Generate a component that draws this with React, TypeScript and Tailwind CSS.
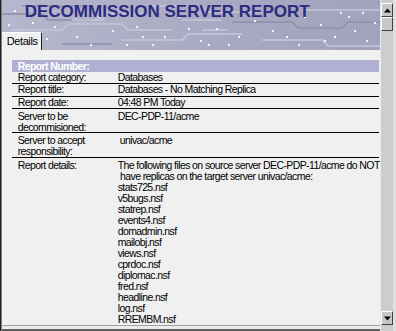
import React from "react";

const files = [
  "stats725.nsf",
  "v5bugs.nsf",
  "statrep.nsf",
  "events4.nsf",
  "domadmin.nsf",
  "mailobj.nsf",
  "views.nsf",
  "cprdoc.nsf",
  "diplomac.nsf",
  "fred.nsf",
  "headline.nsf",
  "log.nsf",
  "RREMBM.nsf",
];

// decorative circuit board traces behind the header
function CircuitBackdrop() {
  const traces = [
    "M0 14 H40 L46 20 H90",
    "M10 30 H60 L66 24 H120 L126 30 H170",
    "M150 6 H200 L206 12 H260",
    "M230 22 H290 L296 28 H340 L346 22 H378",
    "M120 40 H180 L186 34 H240",
    "M260 40 H320 L326 46 H378",
    "M60 44 H110",
    "M300 10 H378",
    "M180 20 H220",
    "M20 6 H90",
    "M70 20 H100 L106 14 H140",
    "M200 30 H226",
  ];
  const dots = [
    [12, 10], [30, 22], [52, 26], [74, 36], [96, 16], [110, 30], [134, 26],
    [150, 44], [162, 36], [176, 16], [198, 40], [214, 28], [236, 36],
    [252, 20], [270, 30], [284, 36], [302, 16], [318, 24], [332, 36],
    [346, 16], [352, 30], [364, 40], [372, 22], [360, 12], [338, 12],
    [206, 44], [124, 44], [88, 44], [44, 38], [6, 24], [140, 36],
    [186, 28], [226, 44], [296, 44], [322, 40],
  ];
  return (
    <svg
      className="absolute inset-0"
      width="378"
      height="50"
      viewBox="0 0 378 50"
    >
      <defs>
        <linearGradient id="hdr" x1="0" y1="0" x2="1" y2="0">
          <stop offset="0" stopColor="#b6b6cc" />
          <stop offset="0.6" stopColor="#a8a8c2" />
          <stop offset="1" stopColor="#a2a2bc" />
        </linearGradient>
      </defs>
      <rect width="378" height="50" fill="url(#hdr)" />
      {traces.map((d, i) => (
        <path
          key={i}
          d={d}
          fill="none"
          stroke={i % 3 === 0 ? "#8e8eac" : "#c6c6da"}
          strokeWidth="1.5"
        />
      ))}
      {dots.map(([x, y], i) => (
        <rect key={i} x={x} y={y} width="2" height="2" fill="#f4f4fa" />
      ))}
    </svg>
  );
}

function ScrollButton({ up }: { up?: boolean }) {
  return (
    <div className="w-[12px] h-[14px] bg-[#c8c8c8] border border-t-white border-l-white border-r-[#404040] border-b-[#404040] flex items-center justify-center">
      <svg width="7" height="5" viewBox="0 0 7 5">
        <path d={up ? "M3.5 0.5 L7 4.5 H0 Z" : "M0 0.5 H7 L3.5 4.5 Z"} fill="#000" />
      </svg>
    </div>
  );
}

function Row({
  label,
  children,
  cls,
}: {
  label: React.ReactNode;
  children: React.ReactNode;
  cls: string;
}) {
  return (
    <div className={`grid grid-cols-[106px_1fr] ${cls}`}>
      <div className="pl-[6px]">{label}</div>
      <div>{children}</div>
    </div>
  );
}

export default function App() {
  return (
    <div
      className="w-[396px] h-[331px] overflow-hidden flex bg-[#e4e4e4] text-[10.5px] leading-[11px] tracking-[-0.6px] text-black"
      style={{ fontFamily: '"Liberation Sans", Arial, sans-serif' }}
    >
      <div className="w-px bg-[#202020]" />
      <div className="w-px bg-[#808080]" />
      <div className="w-[378px] flex flex-col">
        <div className="relative h-[50px] shrink-0">
          <CircuitBackdrop />
          <div className="relative pl-[23px] pt-[2px] text-[17px] leading-[20px] font-bold tracking-normal text-[#2b2b80]">
            DECOMMISSION SERVER REPORT
          </div>
          <div className="absolute left-0 bottom-0 w-[40px] h-[18px] bg-[#f0f0f0] border-t border-white border-r border-r-[#202020] rounded-tr-[2px] flex items-center pl-[5px] text-[11px] tracking-[-0.4px]">
            Details
          </div>
        </div>
        <div className="flex-1 bg-[#f0f0f0] pt-[10px] pl-[10px] pr-[1px]">
          <div className="bg-[#b0b0d4] text-white font-bold h-[12px] pl-[6px] pt-px">
            Report Number:
          </div>
          <Row label="Report category:" cls="h-[11px]">Databases</Row>
          <Row label="Report title:" cls="h-[13px] border-t border-black">
            Databases - No Matching Replica
          </Row>
          <Row label="Report date:" cls="h-[12px] border-t border-black">
            04:48 PM Today
          </Row>
          <Row
            label={<>Server to be<br />decommisioned:</>}
            cls="h-[24px] border-t border-black pt-[2px]"
          >
            DEC-PDP-11/acme
          </Row>
          <Row
            label={<>Server to accept<br />responsibility:</>}
            cls="h-[25px] border-t border-black pt-[2px]"
          >
            <div className="pl-[2px]">univac/acme</div>
          </Row>
          <Row label="Report details:" cls="border-t border-black pt-[2px]">
            <div className="whitespace-nowrap">
              The following files on source server DEC-PDP-11/acme do NOT
            </div>
            <div className="whitespace-pre"> have replicas on the target server univac/acme:</div>
            {files.map((f) => (
              <div key={f}>{f}</div>
            ))}
          </Row>
        </div>
        <div className="h-[6px] shrink-0 border-t border-[#a0a0a0] bg-[#ececec] flex flex-col justify-end">
          <div className="h-[2px] bg-[#606060]" />
        </div>
      </div>
      <div className="w-[2px] bg-[#e8e8e8]" />
      <div className="w-[12px] flex flex-col bg-[#cdcdcd] pt-[3px] pb-[6px]">
        <ScrollButton up />
        <div className="h-[14px] bg-[#c8c8c8] border border-t-white border-l-white border-r-[#404040] border-b-[#404040]" />
        <div className="flex-1" />
        <ScrollButton />
      </div>
      <div className="w-[3px] bg-[#e0e0e0]" />
    </div>
  );
}
